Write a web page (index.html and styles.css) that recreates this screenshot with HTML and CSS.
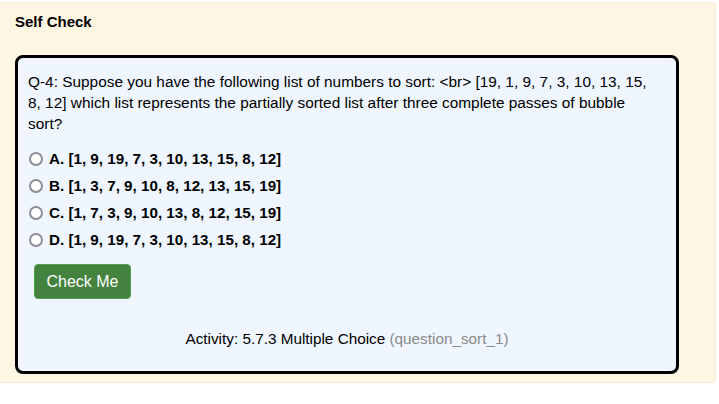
FILE: index.html
```html
<!DOCTYPE html>
<html>
<head>
<meta charset="utf-8">
<link rel="stylesheet" href="styles.css">
</head>
<body>
<div class="panel">
  <div class="title">Self Check</div>
  <div class="box">
    <p class="question">Q-4: Suppose you have the following list of numbers to sort: &lt;br&gt; [19, 1, 9, 7, 3, 10, 13, 15, 8, 12] which list represents the partially sorted list after three complete passes of bubble sort?</p>
    <ul class="choices">
      <li class="choice"><span class="radio"></span><span class="label">A. [1, 9, 19, 7, 3, 10, 13, 15, 8, 12]</span></li>
      <li class="choice"><span class="radio"></span><span class="label">B. [1, 3, 7, 9, 10, 8, 12, 13, 15, 19]</span></li>
      <li class="choice"><span class="radio"></span><span class="label">C. [1, 7, 3, 9, 10, 13, 8, 12, 15, 19]</span></li>
      <li class="choice"><span class="radio"></span><span class="label">D. [1, 9, 19, 7, 3, 10, 13, 15, 8, 12]</span></li>
    </ul>
    <button class="check">Check Me</button>
    <div class="activity">Activity: 5.7.3 Multiple Choice <span class="qid">(question_sort_1)</span></div>
  </div>
</div>
</body>
</html>
```

FILE: styles.css
```css
html, body {
  margin: 0;
  padding: 0;
  background: #ffffff;
}
body {
  padding-top: 2px;
  font-family: "Liberation Sans", Arial, Helvetica, sans-serif;
  font-size: 15px;
  color: #000;
}
.panel {
  width: 716px;
  box-sizing: border-box;
  background: #fdf6e3;
  border: 1px solid #f4edd7;
  border-left: none;
  border-radius: 0 4px 4px 0;
  padding: 9px 37px 8px 15px;
}
.title {
  font-weight: bold;
  font-size: 15px;
  line-height: 20px;
  margin-bottom: 23px;
}
.box {
  width: 664px;
  box-sizing: border-box;
  background: #eff6ff;
  border: 3px solid #000;
  border-radius: 8px;
  padding: 13px 10px 22px 10px;
}
.question {
  margin: 0;
  max-width: 628px;
  font-size: 15.4px;
  line-height: 21px;
}
.choices {
  list-style: none;
  margin: 11px 0 11px 0;
  padding: 0;
}
.choice {
  display: flex;
  align-items: center;
  height: 27px;
  line-height: 27px;
}
.radio {
  width: 10px;
  height: 10px;
  border: 2px solid #8e8e95;
  border-radius: 50%;
  background: #fff;
  margin-left: 1px;
  margin-right: 6px;
  flex: none;
}
.label {
  font-weight: bold;
  font-size: 15.2px;
}
.check {
  display: block;
  margin-left: 6px;
  width: 97px;
  height: 35px;
  background: #43833f;
  border: 1px solid #52a04c;
  border-radius: 4px;
  color: #fff;
  font-family: "Liberation Sans", Arial, Helvetica, sans-serif;
  font-size: 16px;
  padding: 0;
}
.activity {
  margin-top: 30px;
  text-align: center;
  line-height: 20px;
  font-size: 15.3px;
  padding-right: 0;
}
.qid {
  color: #8a8a8a;
}
```
